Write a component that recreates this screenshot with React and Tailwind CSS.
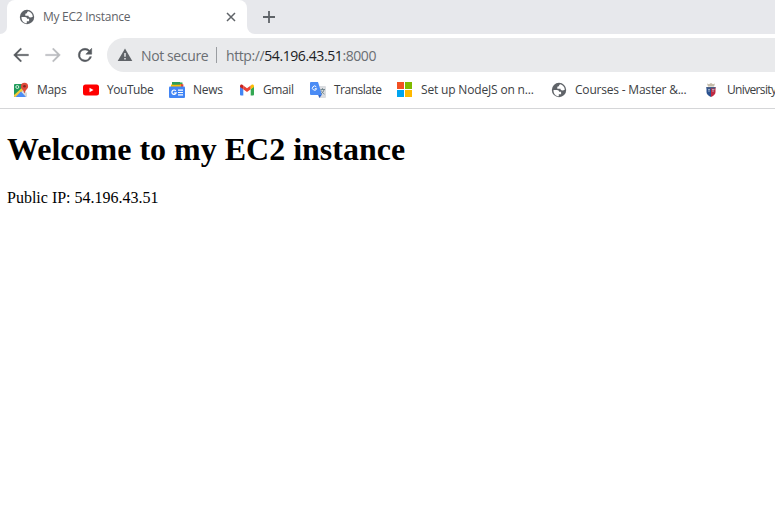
import React from "react";

const UI = "font-['Open_Sans','Noto_Sans',sans-serif]";

function Globe() {
  return (
    <svg viewBox="0 0 16 16" className="h-4 w-4">
      <circle cx="8" cy="8" r="7.2" fill="#5f6368" />
      <path d="M2.500 7.900h3.500c1.300 0 2.100.7 2.100 1.900h2v2.500H7.800v1.900C4.600 14.100 2.300 11.300 2.500 7.900Z" fill="#fff" />
      <path d="M9.300 2.300c2.500.6 4.400 2.800 4.500 5.400-.8.500-1.600.8-2.300.8-1.500 0-2-.8-2-1.700H6.300V4.700c1.400 0 1.700-.5 1.800-1.100.1-.6.500-1 1.200-1.300Z" fill="#fff" />
    </svg>
  );
}

function MapsIcon() {
  return (
    <svg viewBox="0 0 16 16" className="h-4 w-4">
      <path d="M2 2h9v6L2.500 15H2a1 1 0 0 1-1-1V3a1 1 0 0 1 1-1Z" fill="#1e9b5a" />
      <path d="m1 13 10-9 2 2L3 15H2a1 1 0 0 1-1-1Z" fill="#f5ca3c" />
      <path d="m2.500 15 5.500-5.500 5.500 5.500Z" fill="#4d8df5" />
      <path d="m8.500 9.500 2-2L14 11v3a1 1 0 0 1-1 1Z" fill="#d5d7d8" />
      <circle cx="4.300" cy="5" r="1.500" fill="none" stroke="#fff" strokeWidth=".8" />
      <path d="M11.500.8a3.600 3.600 0 0 1 3.600 3.600c0 2.600-2.900 3.300-3.300 6.600h-.6C10.800 7.700 7.900 7 7.900 4.400A3.600 3.600 0 0 1 11.500.8Z" fill="#df493b" />
      <circle cx="11.500" cy="4.300" r="1.300" fill="#80271f" />
    </svg>
  );
}

function YouTubeIcon() {
  return (
    <svg viewBox="0 0 16 16" className="h-4 w-4">
      <rect y="2.500" width="16" height="11" rx="2.500" fill="#f00" />
      <path d="m6.500 5.700 4 2.300-4 2.300Z" fill="#fff" />
    </svg>
  );
}

function NewsIcon() {
  return (
    <svg viewBox="0 0 16 16" className="h-4 w-4">
      <path d="m4 0 9.500.5V4H3Z" fill="#34a853" />
      <path d="m8 1.300 6.500 1.200L14 6H8Z" fill="#ea4335" />
      <path d="M2 2.500h10V6H2Z" fill="#fbbc04" />
      <path d="M3 0h8v2.600H3Z" fill="#2e9e58" />
      <rect y="4.500" width="16" height="11.500" rx="1" fill="#4285f4" />
      <path d="M6.800 8.800A2.200 2.200 0 1 0 7.200 10.800H5.200M9 8.200h5M9 10.500h5M9 12.800h5" fill="none" stroke="#fff" strokeWidth="1.200" />
    </svg>
  );
}

function GmailIcon() {
  return (
    <svg viewBox="0 0 16 16" className="h-4 w-4">
      <path d="M1 4.500 4.300 7v6.500H2a1 1 0 0 1-1-1Z" fill="#4285f4" />
      <path d="M15 4.500 11.700 7v6.500H14a1 1 0 0 0 1-1Z" fill="#34a853" />
      <path d="M4.300 3.500 8 6.300l3.700-2.800V7.300L8 10.100 4.300 7.300Z" fill="#ea4335" />
      <path d="M1 4.200c0-1.500 1.500-2.200 2.600-1.300l.7.600v3.800L1 4.900Z" fill="#c5221f" />
      <path d="M15 4.200c0-1.500-1.500-2.200-2.600-1.300l-.7.600v3.800L15 4.900Z" fill="#fbbc04" />
    </svg>
  );
}

function TranslateIcon() {
  return (
    <svg viewBox="0 0 16 16" className="h-4 w-4">
      <path d="M6 4h9a1 1 0 0 1 1 1v10a1 1 0 0 1-1 1H9Z" fill="#dadce0" />
      <path d="M8 12.500h4L9.500 16Z" fill="#3064c7" />
      <path d="M1 0h7l4 13H1a1 1 0 0 1-1-1V1a1 1 0 0 1 1-1Z" fill="#4b8cf5" />
      <path d="M6.300 4.900A2.100 2.100 0 1 0 6.600 6.700H4.800" fill="none" stroke="#fff" strokeWidth="1" />
      <path d="M10.500 7.500H15M12.500 6.200v1.300M14 7.500c-.3 2-1.500 3.500-3 4.500M11.300 8.500c.6 1.600 1.600 2.800 3.200 3.700" fill="none" stroke="#6b7f86" strokeWidth=".9" />
    </svg>
  );
}

function MicrosoftIcon() {
  return (
    <svg viewBox="0 0 16 16" className="h-4 w-4" shapeRendering="crispEdges">
      <path d="M0 0h7v7H0Z" fill="#f25022" />
      <path d="M8 0h7v7H8Z" fill="#7fba00" />
      <path d="M0 8h7v7H0Z" fill="#00a4ef" />
      <path d="M8 8h7v7H8Z" fill="#ffb900" />
    </svg>
  );
}

function CrestIcon() {
  return (
    <svg viewBox="0 0 16 16" className="h-4 w-4">
      <path d="m4 1.500 2 .8L8 1l2 1.300 2-.8-1 3H5Z" fill="#c4bba8" />
      <path d="M3.500 5H8v10c-3-1.200-4.500-2.800-4.500-5Z" fill="#2b5290" />
      <path d="M8 5h4.500v5c0 2.200-1.500 3.800-4.500 5Z" fill="#c02a42" />
      <path d="M3.500 5h9v1.500h-9Z" fill="#4a5f86" />
      <path d="M5 7.500h2M9 7.500h2.500M6 7.500V10M10 7.500V10" stroke="#aebcd0" strokeWidth=".8" />
    </svg>
  );
}

const bookmarks = [
  { label: "Maps", icon: MapsIcon, box: "w-[70px]", text: "tracking-[-0.3px]" },
  { label: "YouTube", icon: YouTubeIcon, box: "w-[86px]", text: "tracking-[-0.45px]" },
  { label: "News", icon: NewsIcon, box: "w-[70px]", text: "tracking-[-0.3px]" },
  { label: "Gmail", icon: GmailIcon, box: "w-[71px]", text: "tracking-[-0.4px]" },
  { label: "Translate", icon: TranslateIcon, box: "w-[87px]", text: "tracking-[-0.5px]" },
  { label: "Set up NodeJS on n...", icon: MicrosoftIcon, box: "w-[154px]", text: "tracking-[-0.17px]" },
  { label: "Courses - Master &...", icon: Globe, box: "w-[152px]", text: "tracking-[-0.2px]" },
  { label: "University", icon: CrestIcon, box: "w-[72px]", text: "tracking-[-0.65px]" },
];

function TabStrip() {
  return (
    <div className="flex h-[34px] bg-[#e7e8ec]">
      <div className="flex w-[7px] items-end bg-white">
        <div className="h-full w-full rounded-br-[7px] bg-[#e7e8ec]" />
      </div>
      <div className="bg-[#e7e8ec]">
        <div className="flex h-full w-[240px] items-center rounded-t-lg bg-white pl-3">
          <Globe />
          <span className="ml-2 flex-1 whitespace-nowrap text-[12px] tracking-[-0.28px] text-[#5f6368]">My EC2 Instance</span>
          <svg viewBox="0 0 10 10" className="mr-[11px] h-[10px] w-[10px]">
            <path d="m1 1 8 8M9 1 1 9" stroke="#5f6368" strokeWidth="1.500" />
          </svg>
        </div>
      </div>
      <div className="flex flex-1 bg-white">
        <div className="flex flex-1 items-center rounded-bl-lg bg-[#e7e8ec] pl-4">
          <svg viewBox="0 0 12 12" className="h-3 w-3">
            <path d="M6 0v12M0 6h12" stroke="#5f6368" strokeWidth="1.800" />
          </svg>
        </div>
      </div>
    </div>
  );
}

function Toolbar() {
  return (
    <div className="flex h-[42px] items-center pl-[11px]">
      <svg viewBox="0 0 24 24" className="h-5 w-5" fill="#55595e">
        <path d="M21 11H6.830l6.090-6.090L11.500 3.500 3 12l8.500 8.500 1.410-1.410L6.830 13H21v-2z" stroke="#55595e" strokeWidth=".3" />
      </svg>
      <svg viewBox="0 0 24 24" className="ml-3 h-5 w-5" fill="#b9bbbe">
        <path d="m12.500 3.500-1.410 1.410L17.170 11H3v2h14.170l-6.080 6.090 1.410 1.410L21 12z" stroke="#b9bbbe" strokeWidth=".3" />
      </svg>
      <svg viewBox="0 0 24 24" className="ml-3 h-5 w-5" fill="#55595e">
        <path d="M17.650 6.350A7.958 7.958 0 0 0 12 4a8 8 0 1 0 7.730 10h-2.080A6 6 0 1 1 12 6c1.660 0 3.140.69 4.220 1.780L13 11h7V4l-2.350 2.350z" stroke="#55595e" strokeWidth=".6" />
      </svg>
      <div className="ml-3 flex h-[34px] flex-1 items-center whitespace-nowrap rounded-l-full bg-[#e9eaec] pl-[10px] text-[14px] text-[#6a6e73]">
        <svg viewBox="0 0 16 16" className="h-4 w-4">
          <path d="M8 1.500 15.300 14H.7Z" fill="#5f6368" />
          <path d="M8 6v3.800M8 11v1.600" stroke="#e9eaec" strokeWidth="1.500" />
        </svg>
        <span className="ml-2 w-[75px] tracking-[-0.38px]">Not secure</span>
        <span className="h-4 w-px bg-[#9a9da1]" />
        <span className="ml-[9px] tracking-[-0.41px]">
          http://<span className="text-[#202124]">54.196.43.51</span>:8000
        </span>
      </div>
    </div>
  );
}

function BookmarksBar() {
  return (
    <div className="flex h-[33px] overflow-hidden border-b border-[#d5d6d8] pb-1 pl-[13px]">
      {bookmarks.map(({ label, icon: Icon, box, text }) => (
        <div key={label} className={"flex shrink-0 items-center gap-2 whitespace-nowrap text-[12px] text-[#3c4043] " + box}>
          <span className="shrink-0"><Icon /></span>
          <span className={text}>{label}</span>
        </div>
      ))}
    </div>
  );
}

export default function App() {
  return (
    <div className="flex h-screen w-screen flex-col overflow-hidden bg-white">
      <header className={UI}>
        <TabStrip />
        <Toolbar />
        <BookmarksBar />
      </header>
      <main className="flex-1 pl-[7px] pt-[22px] font-['Liberation_Serif','Times_New_Roman',serif] text-black">
        <h1 className="text-[32px] font-bold leading-[37px]">Welcome to my EC2 instance</h1>
        <p className="mt-[21px] text-[16px] leading-[18px]">Public IP: 54.196.43.51</p>
      </main>
    </div>
  );
}
